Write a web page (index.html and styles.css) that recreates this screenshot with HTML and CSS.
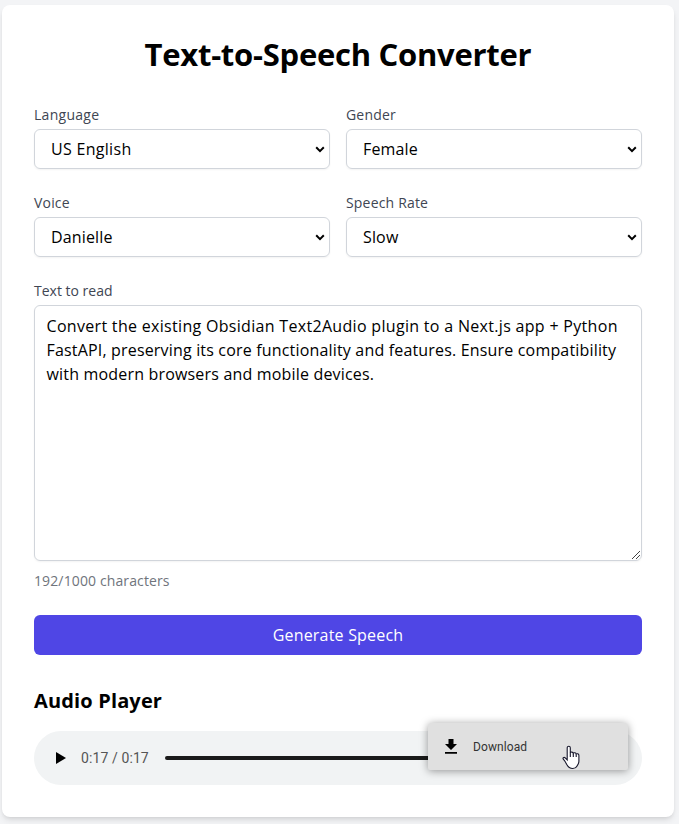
FILE: index.html
```html
<!DOCTYPE html>
<html lang="en">
<head>
<meta charset="utf-8">
<title>Text-to-Speech Converter</title>
<link rel="stylesheet" href="styles.css">
</head>
<body>
<main class="card">
  <h1 class="title"><span>Text-to-Speech Converter</span></h1>
  <form class="form">
    <div class="grid">
      <div class="field">
        <label class="label wide" for="language">Language</label>
        <div class="select wide" id="language"><span>US English</span><svg class="chevron" viewBox="0 0 10 7"><path d="M1.2 1.3 5 5.1l3.8-3.8"/></svg></div>
      </div>
      <div class="field">
        <label class="label" for="gender">Gender</label>
        <div class="select" id="gender"><span>Female</span><svg class="chevron" viewBox="0 0 10 7"><path d="M1.2 1.3 5 5.1l3.8-3.8"/></svg></div>
      </div>
      <div class="field">
        <label class="label" for="voice">Voice</label>
        <div class="select" id="voice"><span>Danielle</span><svg class="chevron" viewBox="0 0 10 7"><path d="M1.2 1.3 5 5.1l3.8-3.8"/></svg></div>
      </div>
      <div class="field">
        <label class="label" for="rate">Speech Rate</label>
        <div class="select" id="rate"><span>Slow</span><svg class="chevron" viewBox="0 0 10 7"><path d="M1.2 1.3 5 5.1l3.8-3.8"/></svg></div>
      </div>
    </div>
    <div class="field">
      <label class="label snug" for="text">Text to read</label>
      <div class="textarea" id="text"><span class="line1">Convert the existing Obsidian Text2Audio plugin to a Next.js app + Python</span><br><span class="line2">FastAPI, preserving its core functionality and features. Ensure compatibility</span><br><span class="line3">with modern browsers and mobile devices.</span><svg class="grip" viewBox="0 0 10 10"><path d="M1 9 9 1M5 9l4-4"/></svg></div>
      <p class="counter">192/1000 characters</p>
    </div>
    <button class="button" type="button">Generate Speech</button>
  </form>
  <section class="audio">
    <h2 class="subtitle">Audio Player</h2>
    <div class="player">
      <svg class="play" viewBox="0 0 10 12"><path d="M0 0v12l10-6z"/></svg>
      <span class="time">0:17 / 0:17</span>
      <div class="track"></div>
      <div class="menu">
        <svg class="download" viewBox="0 0 12 15"><path d="M3.5 0h5v5H12L6 11 0 5h3.500zM0 13h12v1.700H0z"/></svg>
        <span class="menu-text">Download</span>
        <svg class="cursor" viewBox="0 0 18 24"><path d="M5.200 14.500V2.300C5.200.2 8.300.2 8.300 2.300V7.200c.4-1 2.800-.8 3 .6.500-1 2.700-.6 2.900.8.700-.8 2.700-.3 2.700 1.300v5.800c0 2-.8 3.300-1.800 4.700-.8 1.500-2 2.600-4.300 2.600-3.300 0-4.800-1.700-6.200-4.300-.8-1.700-2-3.500-3.300-5-.8-1 .5-2.300 1.700-1.500z"/><path d="M8.300 7v4.500M11.300 8v3.500M14.200 9v2.500"/></svg>
      </div>
    </div>
  </section>
</main>
</body>
</html>
```
FILE: styles.css
```css
* { box-sizing: border-box; margin: 0; padding: 0; }
body {
  background: #f3f4f6;
  padding: 5px 5px 7px 2px;
  font: 16px/24px "Open Sans", "Noto Sans", sans-serif;
  color: #000;
  height: 824px;
  overflow: hidden;
}
svg { display: block; flex: none; }
.card {
  height: 812px;
  padding: 31px 32px 32px;
  background: #fff;
  border-radius: 8px;
  box-shadow: 0 4px 6px -1px rgba(0,0,0,.1), 0 2px 4px -2px rgba(0,0,0,.1);
}
.title { font-size: 31px; line-height: 36px; font-weight: 700; text-align: center; margin-bottom: 33px; white-space: nowrap; letter-spacing: -.26px; }
.form { display: flex; flex-direction: column; gap: 24px; }
.grid { display: grid; grid-template-columns: 1fr 1fr; gap: 24px 16px; }
.label { display: block; font-size: 14px; line-height: 20px; color: #404653; margin-bottom: 4px; letter-spacing: .18px; }
.label.wide { letter-spacing: .28px; }
.label.snug { letter-spacing: 0; }
.select {
  display: flex; align-items: center; justify-content: space-between;
  height: 40px; padding: 0 4px 0 16px;
  border: 1px solid #d1d5db; border-radius: 6px;
  box-shadow: 0 1px 2px rgba(0,0,0,.05);
  letter-spacing: .15px;
}
.select.wide { letter-spacing: .3px; }
.chevron { width: 10px; height: 7px; fill: none; stroke: #000; stroke-width: 2; }
.textarea {
  position: relative; height: 256px; padding: 8px 11.5px;
  border: 1px solid #d1d5db; border-radius: 6px;
  box-shadow: 0 1px 2px rgba(0,0,0,.05);
  white-space: nowrap;
}
.line1 { letter-spacing: .31px; }
.line2 { letter-spacing: .175px; }
.line3 { letter-spacing: .18px; }
.grip { position: absolute; right: 0; bottom: 0; width: 10px; height: 10px; fill: none; stroke: #444; stroke-width: 1; }
.counter { margin-top: 10px; font-size: 14px; line-height: 20px; color: #6f747c; letter-spacing: .12px; }
.button { height: 40px; border: 0; border-radius: 6px; background: #4f46e5; color: #fff; font: inherit; letter-spacing: .2px; }
.audio { margin-top: 32px; }
.subtitle { font-size: 20px; line-height: 28px; font-weight: 700; margin-bottom: 16px; letter-spacing: .15px; }
.player {
  position: relative; display: flex; align-items: center;
  height: 54px; padding: 0 22px; border-radius: 27px; background: #f1f3f4;
}
.play { width: 10px; height: 12px; }
.time { margin: 0 16px 0 15px; font: 14px/20px Roboto, sans-serif; letter-spacing: .1px; color: #555; white-space: nowrap; }
.track { flex: 1; height: 4px; border-radius: 2px; background: #1a1a1a; }
.menu {
  position: absolute; left: 394px; top: -8px; width: 200px; height: 47px;
  display: flex; align-items: center; padding-left: 17px;
  border-radius: 4px 4px 2px 2px; background: #e0e0e0;
  box-shadow: 0 1px 9px rgba(0,0,0,.4);
}
.download { width: 12px; height: 15px; }
.menu-text { margin-left: 16px; font: 12px/16px Roboto, sans-serif; letter-spacing: .1px; color: #333; }
.cursor { position: absolute; left: 134px; top: 22px; width: 18px; height: 25px; fill: #fff; stroke: #15152a; stroke-width: 1.1; }
```
